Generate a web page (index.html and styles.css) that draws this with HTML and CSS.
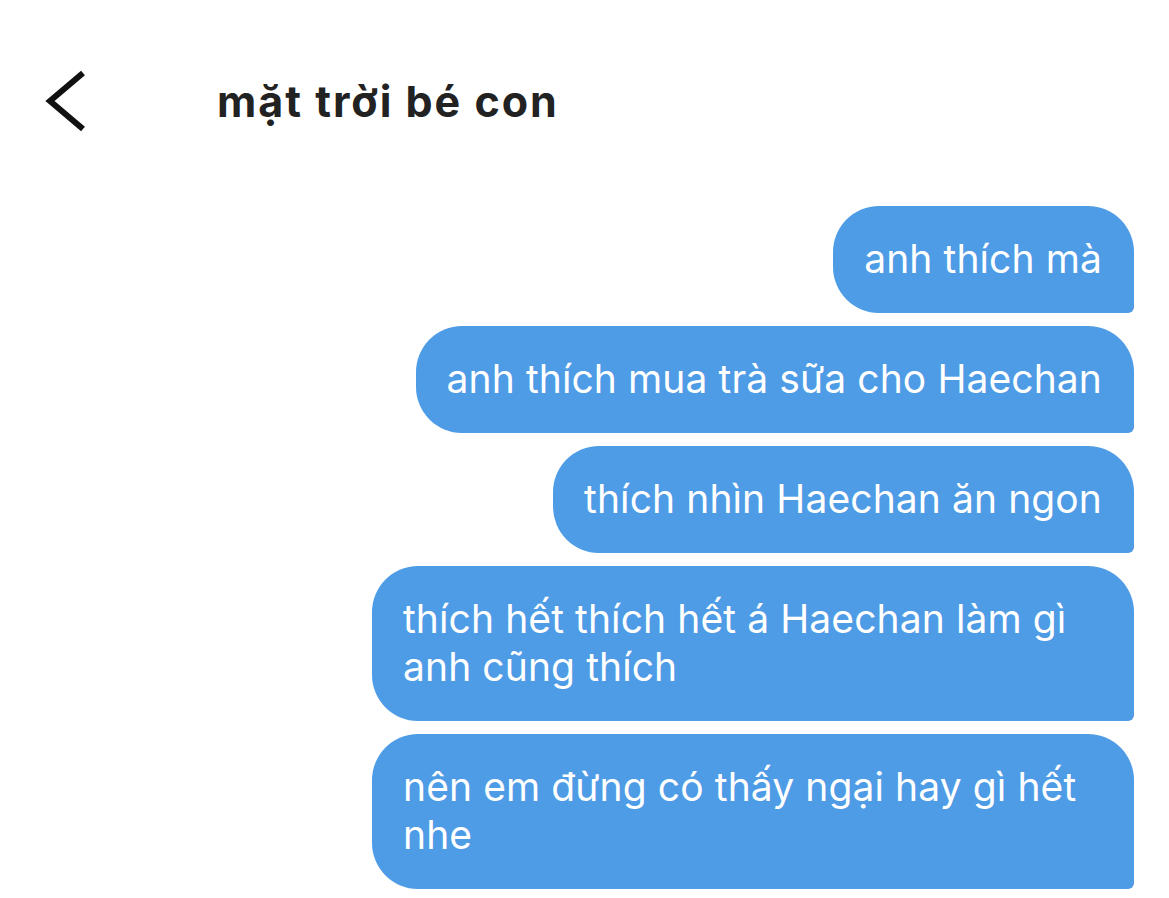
FILE: index.html
```html
<!DOCTYPE html>
<html lang="vi">
<head>
    <meta charset="UTF-8">
    <meta name="viewport" content="width=device-width, initial-scale=1.0">
    <title>mặt trời bé con</title>
    <link rel="stylesheet" href="styles.css">
</head>
<body>
    <header class="chat-header">
        <svg class="back" width="44" height="66" viewBox="0 0 44 66">
            <polyline points="39,5 6,33 39,61" fill="none" stroke="#111" stroke-width="6" stroke-linecap="butt"/>
        </svg>
        <h1 class="chat-title">mặt trời bé con</h1>
    </header>

    <main class="messages">
        <div class="bubble">anh thích mà</div>
        <div class="bubble">anh thích mua trà sữa cho Haechan</div>
        <div class="bubble">thích nhìn Haechan ăn ngon</div>
        <div class="bubble">thích hết thích hết á Haechan làm gì anh cũng thích</div>
        <div class="bubble">nên em đừng có thấy ngại hay gì hết nhe</div>
    </main>
</body>
</html>
```

FILE: styles.css
```css
body {
    margin: 0;
    background: #fff;
    font-family: Inter, "Noto Sans", sans-serif;
    color: #222;
}
.chat-header {
    display: flex;
    align-items: center;
    padding: 66px 0 0 44px;
    height: 70px;
}
.back {
    display: block;
    margin-right: 129px;
}
.chat-title {
    margin: 0;
    font-size: 43px;
    font-weight: 700;
    letter-spacing: 2px;
    color: #222;
}
.messages {
    display: flex;
    flex-direction: column;
    align-items: flex-end;
    gap: 13px;
    padding: 70px 35px 0 0;
}
.bubble {
    box-sizing: border-box;
    max-width: 762px;
    background: #4e9be6;
    color: #fff;
    font-size: 39px;
    letter-spacing: 0.1px;
    line-height: 48px;
    padding: 29px 32px 30px 31px;
    border-radius: 46px 46px 6px 46px;
}
```
